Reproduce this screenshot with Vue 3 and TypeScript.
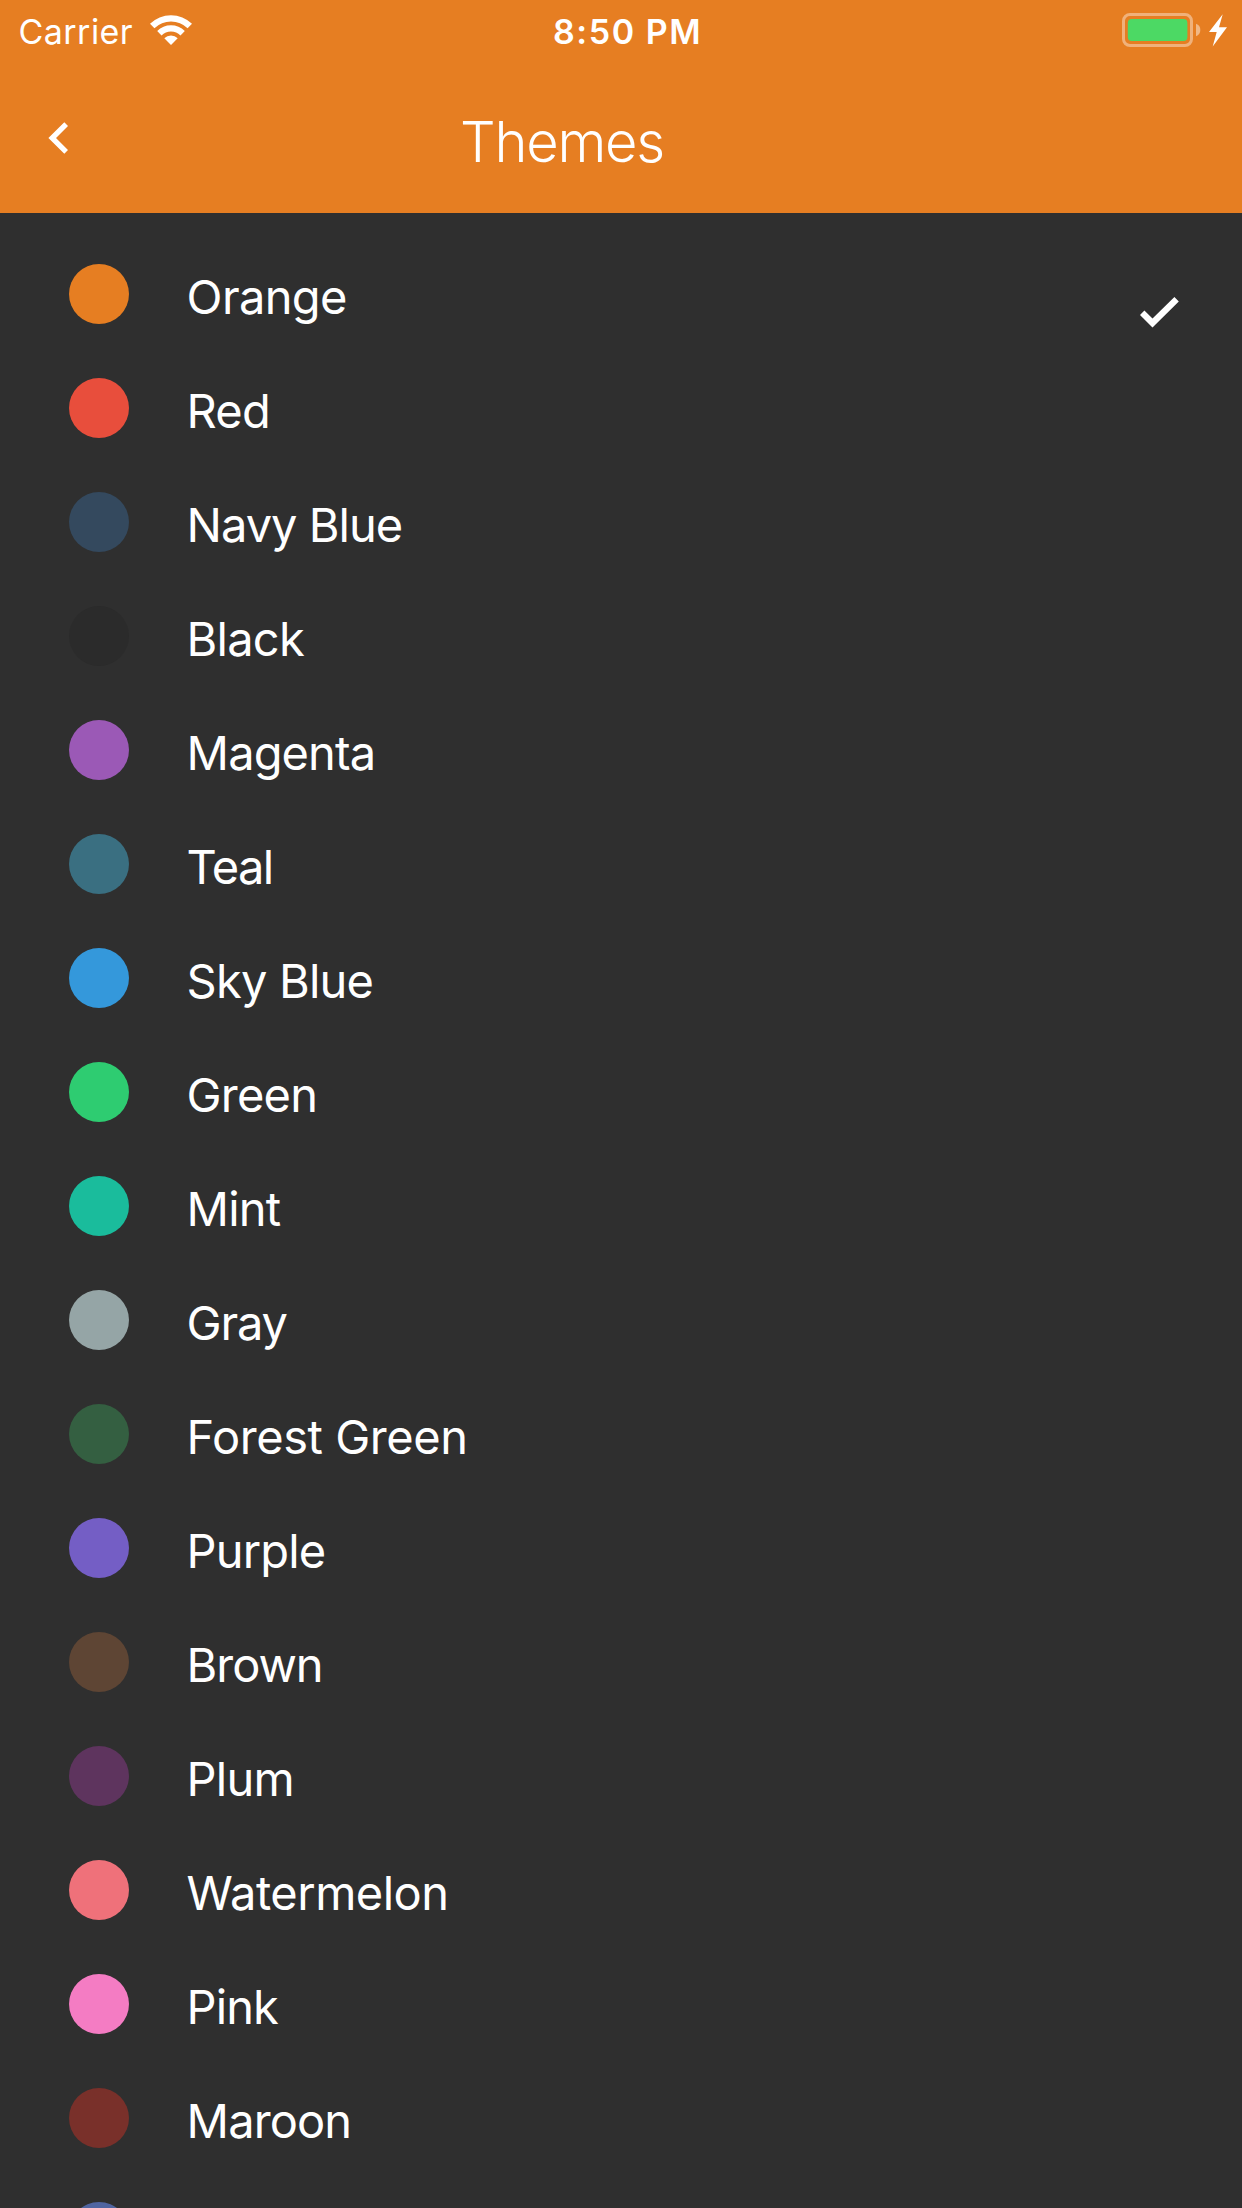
<script setup lang="ts">
interface Theme {
  name: string
  color: string
  tracking: number
}

const themes: Theme[] = [
  { name: 'Orange', color: '#e67e22', tracking: -0.65 },
  { name: 'Red', color: '#e84e3c', tracking: -0.8 },
  { name: 'Navy Blue', color: '#34495e', tracking: -1 },
  { name: 'Black', color: '#2b2b2b', tracking: -0.75 },
  { name: 'Magenta', color: '#9b59b6', tracking: -0.9 },
  { name: 'Teal', color: '#3a6f81', tracking: -1.6 },
  { name: 'Sky Blue', color: '#3498db', tracking: -0.8 },
  { name: 'Green', color: '#2ecc71', tracking: -0.8 },
  { name: 'Mint', color: '#1abc9c', tracking: -0.8 },
  { name: 'Gray', color: '#95a5a6', tracking: -1.2 },
  { name: 'Forest Green', color: '#345f41', tracking: -0.45 },
  { name: 'Purple', color: '#745ec5', tracking: -0.85 },
  { name: 'Brown', color: '#5e4534', tracking: -1.05 },
  { name: 'Plum', color: '#5e345e', tracking: -0.8 },
  { name: 'Watermelon', color: '#ef717a', tracking: -0.5 },
  { name: 'Pink', color: '#f47cc3', tracking: -0.9 },
  { name: 'Maroon', color: '#79302a', tracking: -0.9 },
  { name: '', color: '#5065a1', tracking: 0 },
]
const selected = 'Orange'
</script>

<template>
  <div class="screen">
    <header class="header">
      <div class="status">
        <div class="status-left">
          <span class="carrier">Carrier</span>
          <svg class="wifi" width="42" height="30" viewBox="0 0 42 30" fill="#fff">
            <path d="M0 8.8A30 30 0 0 1 42 8.8L37.6 13.2A23.7 23.7 0 0 0 4.4 13.2Z" />
            <path d="M7.2 16A19.6 19.6 0 0 1 34.8 16L30.5 20.4A13.6 13.6 0 0 0 11.5 20.4Z" />
            <path d="M14.3 23.2A9.5 9.5 0 0 1 27.7 23.2L21 30Z" />
          </svg>
        </div>
        <span class="time">8:50 PM</span>
        <svg class="battery" width="106" height="34" viewBox="0 0 106 34">
          <rect x="1.5" y="1.5" width="68" height="31" rx="6.5" fill="none" stroke="#fff" stroke-opacity=".4" stroke-width="3" />
          <rect x="5.8" y="6" width="59.6" height="22" rx="4" fill="#4cd964" />
          <path d="M74 10.8A6.6 6.6 0 0 1 74 23.2Z" fill="#fff" fill-opacity=".45" />
          <path d="M100.7 1.3L87 19H94.7L90.7 33.5L105 14.2H97Z" fill="#fff" />
        </svg>
      </div>
      <nav class="bar">
        <svg class="back" width="20" height="32" viewBox="0 0 20 32" fill="#fff">
          <path d="M16.3 .3L20 4L8 16L20 28L16.3 31.7L.4 16Z" />
        </svg>
        <h1 class="title">Themes</h1>
      </nav>
    </header>
    <ul class="list">
      <li v-for="theme in themes" :key="theme.color" class="row">
        <span class="swatch" :style="{ backgroundColor: theme.color }"></span>
        <span class="name" :style="{ letterSpacing: theme.tracking + 'px' }">{{ theme.name }}</span>
        <svg v-if="theme.name === selected" class="check" width="39" height="31" viewBox="0 0 39 31" fill="#fff">
          <path d="M0 18L4.4 13.6L12.5 21.6L34.4 .1L38.8 4.4L12.5 30.5Z" />
        </svg>
      </li>
    </ul>
  </div>
</template>

<style>
body {
  margin: 0;
  background: #2f2f2f;
}
</style>

<style scoped>
.screen {
  width: 1242px;
  height: 2208px;
  overflow: hidden;
  background: #2f2f2f;
  color: #fff;
  font-family: Inter, "Liberation Sans", sans-serif;
}
.header {
  height: 213px;
  background: #e67e22;
}
.status {
  display: grid;
  grid-template-columns: 554px 1fr 106px;
  align-items: start;
  height: 60px;
  padding-right: 14px;
  font-size: 34px;
  line-height: 40px;
}
.status-left {
  display: flex;
  align-items: flex-start;
  padding-left: 18.5px;
}
.carrier {
  width: 131.5px;
  margin-top: 12px;
  letter-spacing: 0.45px;
}
.wifi {
  margin-top: 15px;
}
.time {
  margin-top: 12px;
  font-weight: 600;
  letter-spacing: 1.55px;
  margin-left: -1px;
}
.battery {
  margin-top: 13px;
}
.bar {
  display: flex;
  align-items: flex-start;
  padding-left: 48px;
}
.back {
  margin-top: 62px;
}
.title {
  margin: 52px 0 0 392px;
  font-size: 56px;
  line-height: 60px;
  font-weight: 300;
  letter-spacing: -1.2px;
}
.list {
  margin: 0;
  padding: 24px 0 0;
  list-style: none;
}
.row {
  display: flex;
  align-items: center;
  height: 114px;
  padding: 0 63px 0 69px;
}
.swatch {
  width: 60px;
  height: 60px;
  border-radius: 50%;
}
.name {
  flex: 1;
  margin-left: 57.6px;
  padding-top: 6px;
  font-size: 47px;
  line-height: 60px;
}
.check {
  margin-top: 36px;
}
</style>
